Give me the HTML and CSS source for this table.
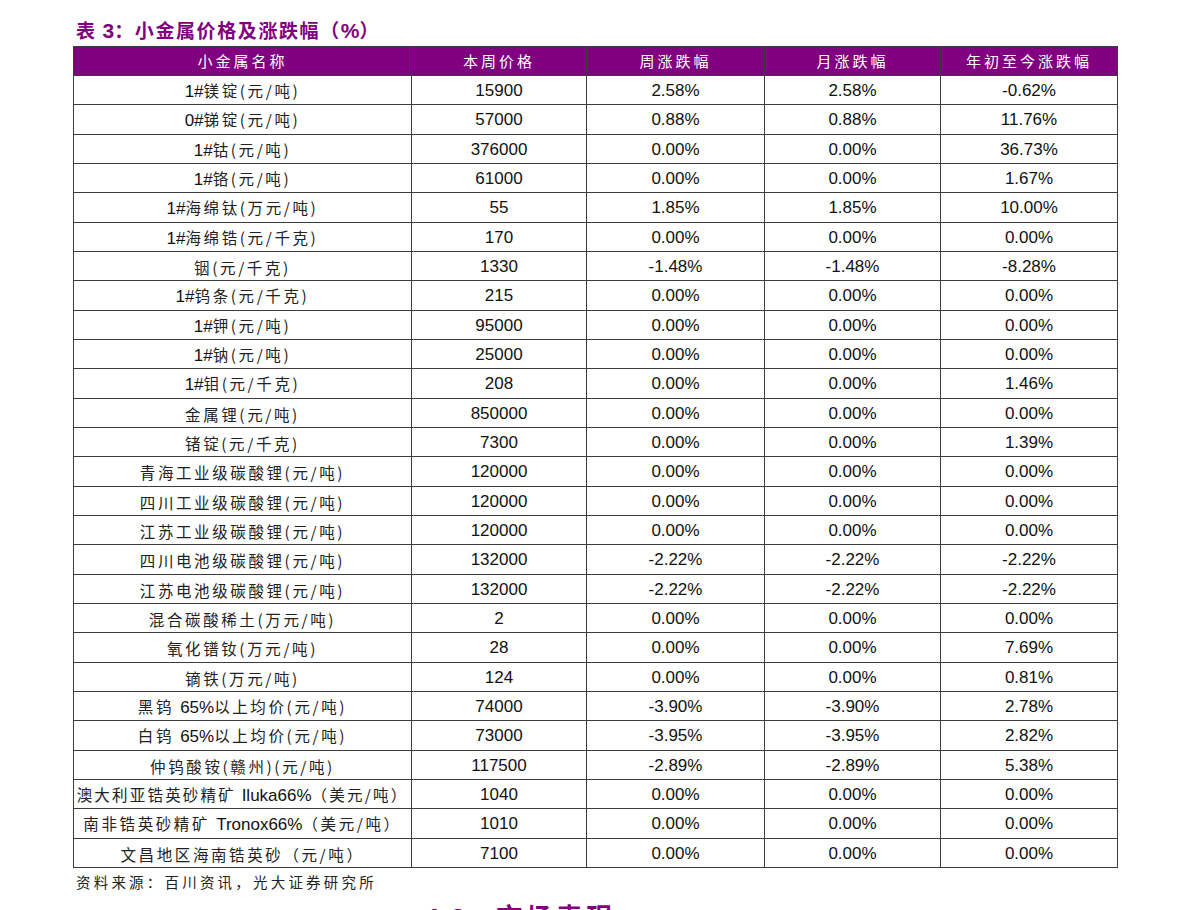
FILE: index.html
```html
<!DOCTYPE html>
<html lang="zh">
<head>
<meta charset="utf-8">
<title>小金属价格及涨跌幅</title>
<link rel="stylesheet" href="styles.css">
</head>
<body>
<div class="page">
  <h1 class="title">表 <span class="en">3</span>：小金属价格及涨跌幅（<span class="en">%</span>）</h1>
  <table class="grid">
    <colgroup>
      <col class="c1"><col class="c2"><col class="c3"><col class="c4"><col class="c5">
    </colgroup>
    <thead>
      <tr><th>小金属名称</th><th>本周价格</th><th>周涨跌幅</th><th>月涨跌幅</th><th>年初至今涨跌幅</th></tr>
    </thead>
    <tbody>
      <tr><td class="name"><span class="en">1#</span>镁锭(元/吨)</td><td>15900</td><td>2.58%</td><td>2.58%</td><td>-0.62%</td></tr>
      <tr><td class="name"><span class="en">0#</span>锑锭(元/吨)</td><td>57000</td><td>0.88%</td><td>0.88%</td><td>11.76%</td></tr>
      <tr><td class="name"><span class="en">1#</span>钴(元/吨)</td><td>376000</td><td>0.00%</td><td>0.00%</td><td>36.73%</td></tr>
      <tr><td class="name"><span class="en">1#</span>铬(元/吨)</td><td>61000</td><td>0.00%</td><td>0.00%</td><td>1.67%</td></tr>
      <tr><td class="name"><span class="en">1#</span>海绵钛(万元/吨)</td><td>55</td><td>1.85%</td><td>1.85%</td><td>10.00%</td></tr>
      <tr><td class="name"><span class="en">1#</span>海绵锆(元/千克)</td><td>170</td><td>0.00%</td><td>0.00%</td><td>0.00%</td></tr>
      <tr><td class="name">铟(元/千克)</td><td>1330</td><td>-1.48%</td><td>-1.48%</td><td>-8.28%</td></tr>
      <tr><td class="name"><span class="en">1#</span>钨条(元/千克)</td><td>215</td><td>0.00%</td><td>0.00%</td><td>0.00%</td></tr>
      <tr><td class="name"><span class="en">1#</span>钾(元/吨)</td><td>95000</td><td>0.00%</td><td>0.00%</td><td>0.00%</td></tr>
      <tr><td class="name"><span class="en">1#</span>钠(元/吨)</td><td>25000</td><td>0.00%</td><td>0.00%</td><td>0.00%</td></tr>
      <tr><td class="name"><span class="en">1#</span>钼(元/千克)</td><td>208</td><td>0.00%</td><td>0.00%</td><td>1.46%</td></tr>
      <tr><td class="name">金属锂(元/吨)</td><td>850000</td><td>0.00%</td><td>0.00%</td><td>0.00%</td></tr>
      <tr><td class="name">锗锭(元/千克)</td><td>7300</td><td>0.00%</td><td>0.00%</td><td>1.39%</td></tr>
      <tr><td class="name">青海工业级碳酸锂(元/吨)</td><td>120000</td><td>0.00%</td><td>0.00%</td><td>0.00%</td></tr>
      <tr><td class="name">四川工业级碳酸锂(元/吨)</td><td>120000</td><td>0.00%</td><td>0.00%</td><td>0.00%</td></tr>
      <tr><td class="name">江苏工业级碳酸锂(元/吨)</td><td>120000</td><td>0.00%</td><td>0.00%</td><td>0.00%</td></tr>
      <tr><td class="name">四川电池级碳酸锂(元/吨)</td><td>132000</td><td>-2.22%</td><td>-2.22%</td><td>-2.22%</td></tr>
      <tr><td class="name">江苏电池级碳酸锂(元/吨)</td><td>132000</td><td>-2.22%</td><td>-2.22%</td><td>-2.22%</td></tr>
      <tr><td class="name">混合碳酸稀土(万元/吨)</td><td>2</td><td>0.00%</td><td>0.00%</td><td>0.00%</td></tr>
      <tr><td class="name">氧化镨钕(万元/吨)</td><td>28</td><td>0.00%</td><td>0.00%</td><td>7.69%</td></tr>
      <tr><td class="name">镝铁(万元/吨)</td><td>124</td><td>0.00%</td><td>0.00%</td><td>0.81%</td></tr>
      <tr><td class="name">黑钨 <span class="en">65%</span>以上均价(元/吨)</td><td>74000</td><td>-3.90%</td><td>-3.90%</td><td>2.78%</td></tr>
      <tr><td class="name">白钨 <span class="en">65%</span>以上均价(元/吨)</td><td>73000</td><td>-3.95%</td><td>-3.95%</td><td>2.82%</td></tr>
      <tr><td class="name">仲钨酸铵(赣州)(元/吨)</td><td>117500</td><td>-2.89%</td><td>-2.89%</td><td>5.38%</td></tr>
      <tr><td class="name tight">澳大利亚锆英砂精矿 <span class="en">Iluka66%</span>（美元/吨）</td><td>1040</td><td>0.00%</td><td>0.00%</td><td>0.00%</td></tr>
      <tr><td class="name">南非锆英砂精矿 <span class="en">Tronox66%</span>（美元/吨）</td><td>1010</td><td>0.00%</td><td>0.00%</td><td>0.00%</td></tr>
      <tr><td class="name">文昌地区海南锆英砂（元/吨）</td><td>7100</td><td>0.00%</td><td>0.00%</td><td>0.00%</td></tr>
    </tbody>
  </table>
  <p class="source">资料来源：百川资讯，光大证券研究所</p>
  <h2 class="section"><span class="en">1.2</span>、市场表现</h2>
</div>
</body>
</html>
```
FILE: styles.css
```css
html, body {
  margin: 0;
  padding: 0;
  background: #ffffff;
}

body {
  font-family: "Liberation Sans", "Noto Sans CJK SC", sans-serif;
  color: #111111;
}

.page {
  padding: 14px 0 0 73px;
  width: 1044px;
}

.title {
  margin: 0;
  padding-left: 3px;
  height: 32px;
  line-height: 32px;
  font-size: 19px;
  font-weight: bold;
  letter-spacing: 1.6px;
  color: #800080;
  font-family: "Noto Sans CJK SC", sans-serif;
  white-space: nowrap;
}

.title .en {
  font-family: "Liberation Sans", sans-serif;
  font-size: 21px;
  letter-spacing: 0;
}

.grid {
  width: 1045px;
  border-collapse: collapse;
  table-layout: fixed;
}

.c1 { width: 338px; }
.c2 { width: 175px; }
.c3 { width: 178px; }
.c4 { width: 176px; }
.c5 { width: 177px; }

.grid th,
.grid td {
  border: 1px solid #3c3c3c;
  padding: 0;
  text-align: center;
  vertical-align: middle;
  white-space: nowrap;
  overflow: hidden;
}

.grid th {
  height: 28px;
  background: #800080;
  color: #ffffff;
  font-family: "Noto Sans CJK SC", sans-serif;
  font-weight: normal;
  font-size: 15px;
  letter-spacing: 3px;
  line-height: 18px;
}

.grid td {
  height: 26.33px;
  padding-top: 2px;
  font-size: 17px;
  line-height: 18px;
  color: #111111;
}

.grid td.name {
  font-family: "Noto Sans CJK SC", sans-serif;
  font-size: 15.5px;
  letter-spacing: 2.6px;
  color: #222222;
}

.grid td.name.tight {
  letter-spacing: 2.2px;
}

.grid td.name .en {
  font-family: "Liberation Sans", sans-serif;
  font-size: 17px;
  line-height: 18px;
  letter-spacing: 0;
  color: #111111;
}

.source {
  margin: 0;
  padding-left: 3px;
  height: 28px;
  line-height: 28px;
  font-family: "Noto Sans CJK SC", sans-serif;
  font-size: 14.5px;
  letter-spacing: 3.2px;
  color: #222222;
}

.section {
  margin: 0;
  padding: 5px 0 0 354px;
  font-family: "Noto Sans CJK SC", sans-serif;
  font-size: 26px;
  line-height: 30px;
  font-weight: bold;
  letter-spacing: 4px;
  color: #800080;
}

.section .en {
  font-family: "Liberation Sans", sans-serif;
  letter-spacing: 1px;
}
```
